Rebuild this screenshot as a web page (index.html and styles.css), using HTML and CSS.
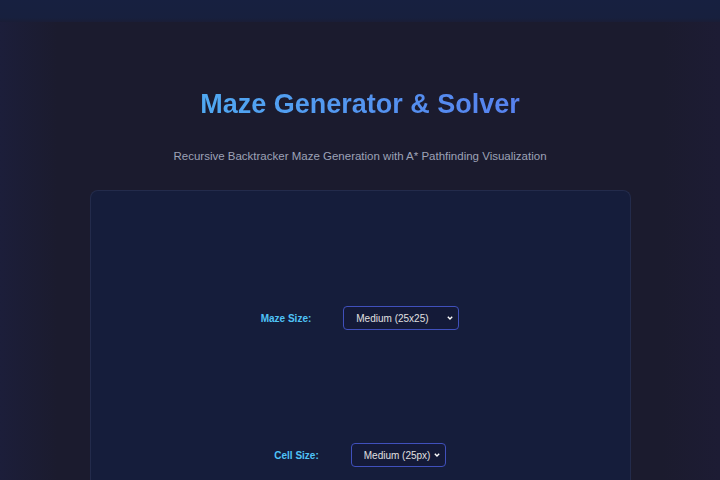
FILE: index.html
```html
<!DOCTYPE html>
<html lang="en">
<head>
    <meta charset="UTF-8">
    <meta name="viewport" content="width=device-width, initial-scale=1.0">
    <title>Maze Generator &amp; Solver</title>
    <link rel="stylesheet" href="styles.css">
</head>
<body>
    <!-- Top strip -->
    <div class="top-bar"></div>

    <div class="container">
        <header class="header">
            <h1 class="title">Maze Generator &amp; Solver</h1>
            <p class="subtitle">Recursive Backtracker Maze Generation with A* Pathfinding Visualization</p>
        </header>

        <!-- Controls -->
        <div class="panel">
            <div class="control-group">
                <label class="control-label" for="maze-size">Maze Size:</label>
                <select class="control-select" id="maze-size">
                    <option>Small (15x15)</option>
                    <option selected>Medium (25x25)</option>
                    <option>Large (35x35)</option>
                </select>
            </div>

            <div class="control-group">
                <label class="control-label" for="cell-size">Cell Size:</label>
                <select class="control-select" id="cell-size">
                    <option>Small (15px)</option>
                    <option selected>Medium (25px)</option>
                    <option>Large (35px)</option>
                </select>
            </div>
        </div>
    </div>
</body>
</html>
```

FILE: styles.css
```css
* {
    margin: 0;
    padding: 0;
    box-sizing: border-box;
}

body {
    font-family: "Liberation Sans", Arial, sans-serif;
    background: linear-gradient(90deg, #1c1e3a 0%, #1b1b2e 8%, #1b1b2e 92%, #1d1c34 100%);
    color: #e0e0e0;
    height: 100vh;
    overflow: hidden;
}

/* Thin strip at the very top */
.top-bar {
    height: 22px;
    background: linear-gradient(180deg, #172040 0%, #17203e 80%, #1a1d36 100%);
}

.container {
    width: 541px;
    margin: 0 auto;
}

/* Title and tagline */
.header {
    text-align: center;
    padding-top: 66px;
}

.title {
    font-size: 27px;
    font-weight: 700;
    line-height: 32px;
    background: linear-gradient(90deg, #4db6f2, #5a74ee);
    -webkit-background-clip: text;
    -webkit-text-fill-color: transparent;
}

.subtitle {
    margin-top: 28px;
    font-size: 11.5px;
    line-height: 16px;
    color: #9da2b6;
}

/* Controls panel */
.panel {
    margin-top: 26px;
    height: 290px;
    background: #151d3b;
    border: 1px solid #232b4b;
    border-bottom: none;
    border-radius: 8px 8px 0 0;
    padding-top: 115px;
    display: flex;
    flex-direction: column;
    align-items: center;
    gap: 113px;
}

.control-group {
    display: flex;
    align-items: center;
    gap: 32px;
}

.control-label {
    font-size: 10px;
    font-weight: 700;
    color: #4fc3f7;
}

.control-select {
    -webkit-appearance: none;
    appearance: none;
    height: 24px;
    padding: 0 14px 0 12px;
    font-family: "Liberation Sans", Arial, sans-serif;
    font-size: 10px;
    color: #e0e0e0;
    background: #141a38 url("data:image/svg+xml,%3Csvg xmlns='http://www.w3.org/2000/svg' width='6' height='4' viewBox='0 0 6 4'%3E%3Cpolyline points='0.8,0.8 3,3 5.2,0.8' fill='none' stroke='%23ffffff' stroke-width='1.4'/%3E%3C/svg%3E") no-repeat right 5px center;
    border: 1px solid #4050bc;
    border-radius: 4px;
}

#maze-size {
    width: 116px;
}

#cell-size {
    width: 95px;
}
```
